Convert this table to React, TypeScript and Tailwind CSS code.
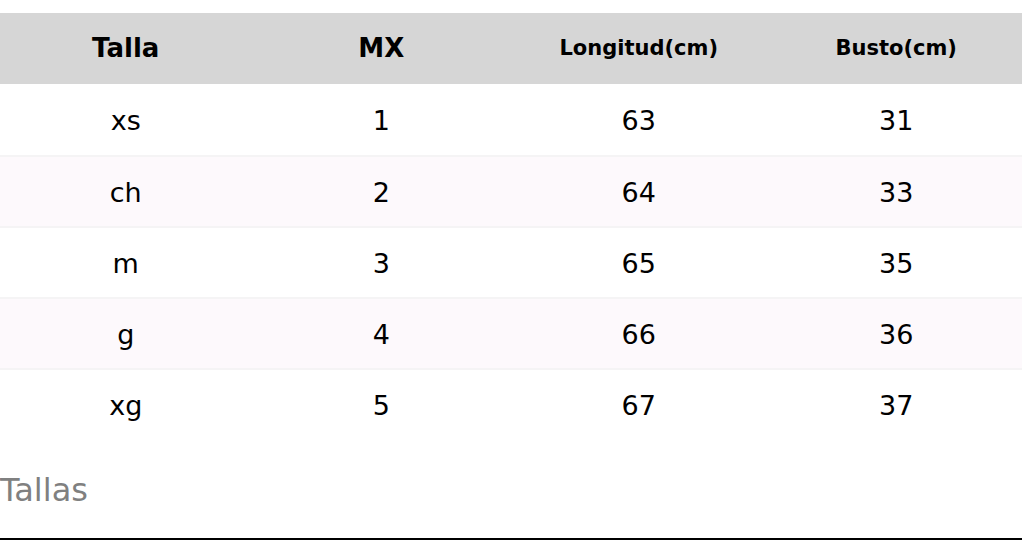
const rows = [
  ["xs", "1", "63", "31"],
  ["ch", "2", "64", "33"],
  ["m", "3", "65", "35"],
  ["g", "4", "66", "36"],
  ["xg", "5", "67", "37"],
];

export default function App() {
  return (
    <div className="w-[1022px] h-[540px] bg-white overflow-hidden flex flex-col font-['DejaVu_Sans',sans-serif] text-black">
      {/* size table */}
      <div className="mt-[13px]">
        <div className="grid grid-cols-4 h-[71px] bg-[#d6d6d6] items-center text-center font-bold">
          <div className="text-[26px] pr-[4px]">Talla</div>
          <div className="text-[26px] pr-[4px]">MX</div>
          <div className="text-[21px]">Longitud(cm)</div>
          <div className="text-[21px] pl-[4px]">Busto(cm)</div>
        </div>
        {rows.map((r, i) => (
          <div
            key={i}
            className={`grid grid-cols-4 h-[71px] items-center text-center text-[27px] pt-[3px] ${
              i > 0 ? "border-t-2 border-[#f5f4f5]" : ""
            } ${i % 2 === 1 ? "bg-[#fdf9fc]" : "bg-white"}`}
          >
            <div className="pr-[4px]">{r[0]}</div>
            <div className="pr-[4px]">{r[1]}</div>
            <div>{r[2]}</div>
            <div className="pl-[4px]">{r[3]}</div>
          </div>
        ))}
      </div>
      <div className="mt-[35px] text-[32px] text-[#808080] leading-none">Tallas</div>
      <div className="mt-auto h-[2px] bg-black" />
    </div>
  );
}
